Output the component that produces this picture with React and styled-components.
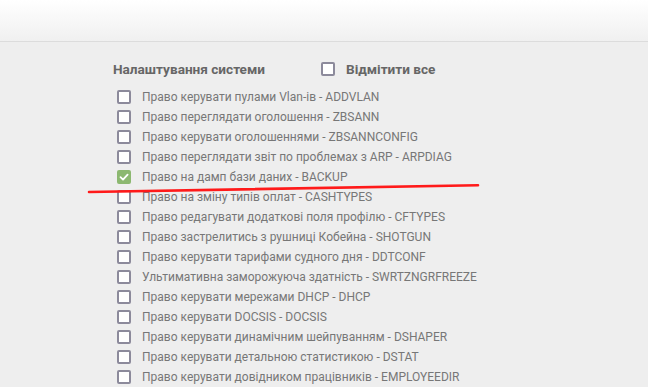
import React from "react";
import styled, { createGlobalStyle } from "styled-components";

const rights = [
  ["Право керувати пулами Vlan-ів", "ADDVLAN"],
  ["Право переглядати оголошення", "ZBSANN"],
  ["Право керувати оголошеннями", "ZBSANNCONFIG"],
  ["Право переглядати звіт по проблемах з ARP", "ARPDIAG"],
  ["Право на дамп бази даних", "BACKUP", true],
  ["Право на зміну типів оплат", "CASHTYPES"],
  ["Право редагувати додаткові поля профілю", "CFTYPES"],
  ["Право застрелитись з рушниці Кобейна", "SHOTGUN"],
  ["Право керувати тарифами судного дня", "DDTCONF"],
  ["Ультимативна заморожуюча здатність", "SWRTZNGRFREEZE"],
  ["Право керувати мережами DHCP", "DHCP"],
  ["Право керувати DOCSIS", "DOCSIS"],
  ["Право керувати динамічним шейпуванням", "DSHAPER"],
  ["Право керувати детальною статистикою", "DSTAT"],
  ["Право керувати довідником працівників", "EMPLOYEEDIR"],
];

const GlobalStyle = createGlobalStyle`
  html, body {
    margin: 0;
    background: #eeeeee;
    font-family: Roboto, "Liberation Sans", sans-serif;
    overflow: hidden;
  }
`;

const Page = styled.div`
  position: relative;
  height: 387px;
`;

const Header = styled.div`
  height: 41px;
  background: linear-gradient(to bottom, #ffffff 0%, #f0f0f0 100%);
  border-bottom: 1px solid #dcdcdc;
`;

const Content = styled.div`
  padding: 17px 0 0 113px;
`;

const TitleRow = styled.div`
  display: flex;
  align-items: center;
  height: 20px;
  margin-bottom: 8px;
`;

const Title = styled.div`
  width: 208px;
  font-size: 13.6px;
  font-weight: bold;
  color: #666;
`;

const Box = styled.span`
  box-sizing: border-box;
  width: 14px;
  height: 14px;
  border-radius: 2px;
  border: ${(p) => (p.checked ? "none" : "2px solid #8c8a9b")};
  background: ${(p) => (p.checked ? "#8cb870" : "#fff")};
  display: flex;
  align-items: center;
  justify-content: center;
  flex-shrink: 0;
`;

const SelectAll = styled.label`
  display: flex;
  align-items: center;
  gap: 11px;
  font-size: 13.6px;
  font-weight: bold;
  color: #666;
`;

const List = styled.div`
  padding-left: 4px;
`;

const Row = styled.label`
  display: flex;
  align-items: center;
  gap: 11px;
  height: 20px;
  font-size: 12px;
  color: #777;
`;

const Scribble = styled.svg`
  position: absolute;
  left: 0;
  top: 0;
  width: 648px;
  height: 387px;
  pointer-events: none;
`;

const Check = ({ checked }) => (
  <Box checked={checked}>
    {checked && (
      <svg width="10" height="10" viewBox="0 0 10 10">
        <path d="M1.5 5.2 L4 7.6 L8.6 2.6" fill="none" stroke="#fff" strokeWidth="1.8" strokeLinecap="round" strokeLinejoin="round" />
      </svg>
    )}
  </Box>
);

export default function App() {
  return (
    <Page>
      <GlobalStyle />
      <Header />
      <Content>
        <TitleRow>
          <Title>Налаштування системи</Title>
          <SelectAll>
            <Check />
            Відмітити все
          </SelectAll>
        </TitleRow>
        <List>
          {rights.map(([name, code, checked]) => (
            <Row key={code}>
              <Check checked={checked} />
              {name} - {code}
            </Row>
          ))}
        </List>
      </Content>
      <Scribble viewBox="0 0 648 387">
        <path d="M89 192 C 240 189.5, 380 186.5, 478 185.3" fill="none" stroke="#ff1a1a" strokeWidth="2.6" strokeLinecap="round" />
      </Scribble>
    </Page>
  );
}
